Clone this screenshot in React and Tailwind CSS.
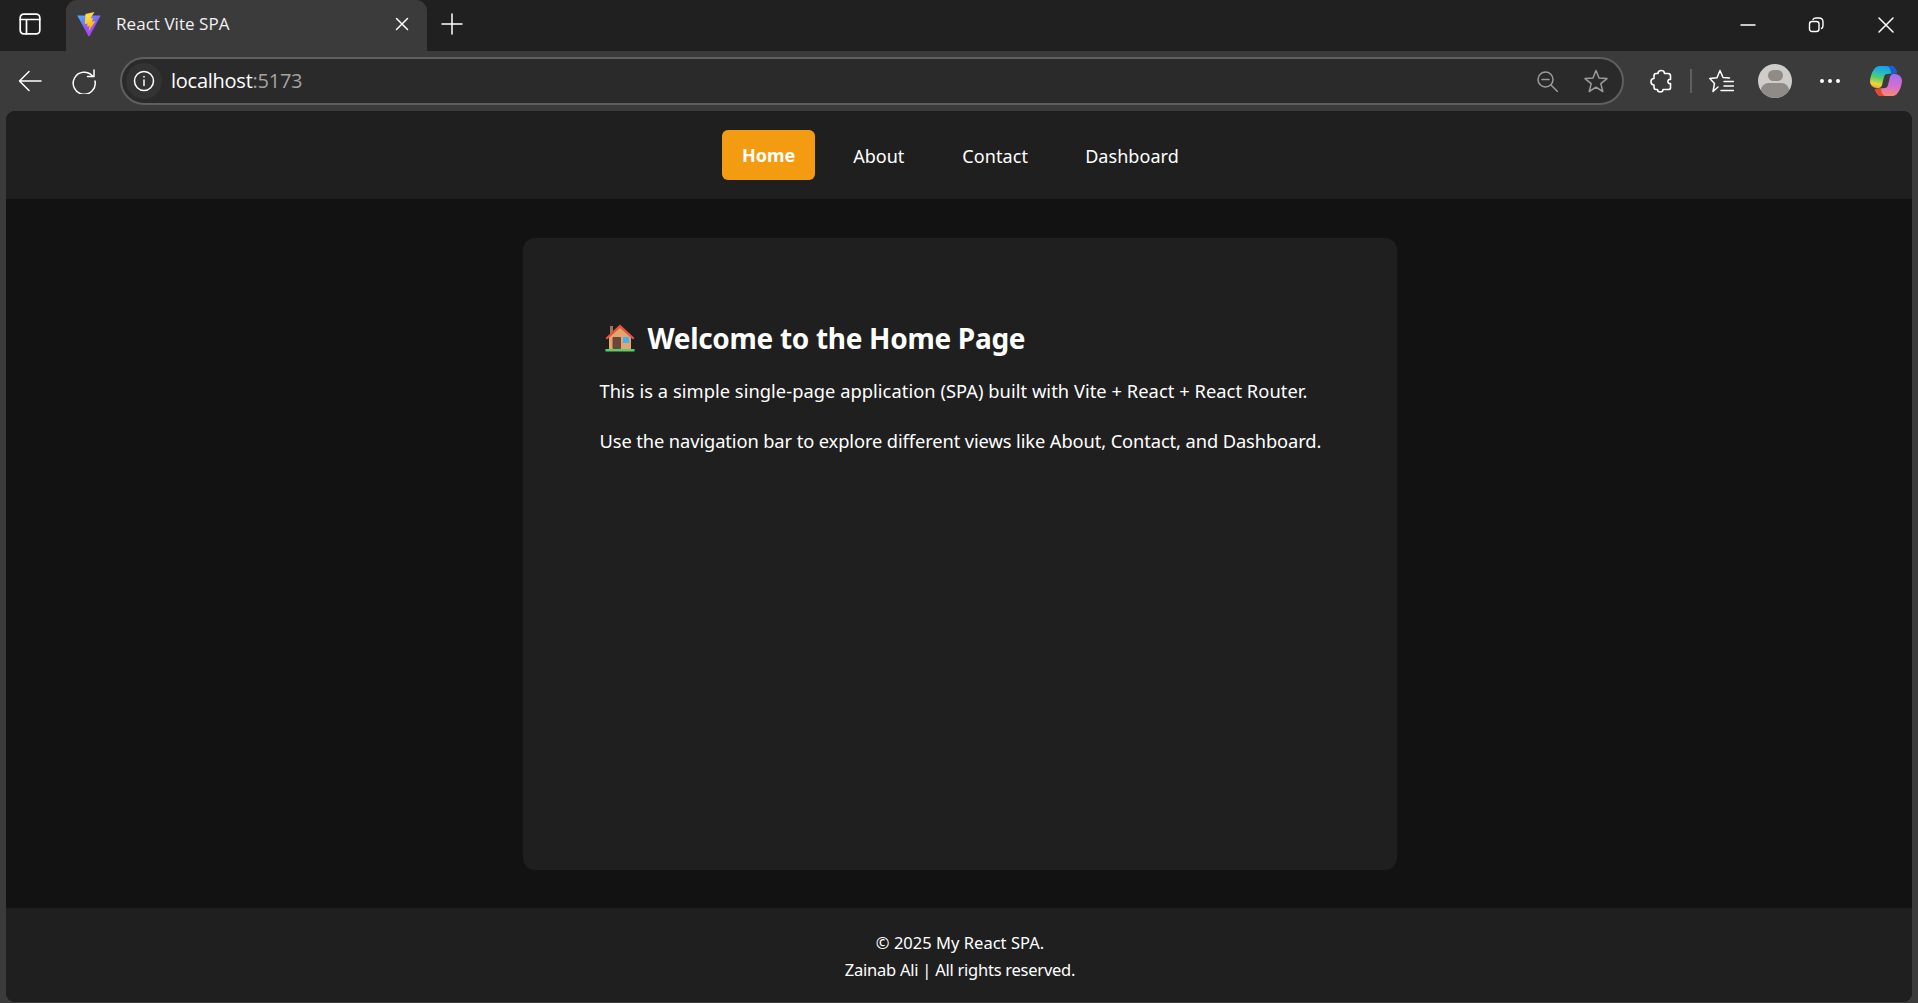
import React from "react";

function Vite() {
  return (
    <svg width="24" height="25" viewBox="0 0 24 25">
      <defs>
        <linearGradient id="v1" x1="0" y1="0" x2="0.7" y2="1">
          <stop offset="0" stopColor="#41b8ff" />
          <stop offset="0.55" stopColor="#8a5cfb" />
          <stop offset="1" stopColor="#bd34fe" />
        </linearGradient>
        <linearGradient id="v2" x1="0" y1="0" x2="0.4" y2="1">
          <stop offset="0" stopColor="#ffe45c" />
          <stop offset="0.5" stopColor="#ffd02e" />
          <stop offset="1" stopColor="#ffa800" />
        </linearGradient>
      </defs>
      <path d="M0.3 3.5 L23.7 3.5 L12.6 24 Q12 24.8 11.4 24 Z" fill="url(#v1)" />
      <path d="M17.5 0 L8.5 2 L7.8 12 L10.6 11.4 L10 14.5 L12.6 13.9 L11.5 19.5 L18.5 9 L15 9.7 L16 6 L13.4 6.5 Z" fill="url(#v2)" />
    </svg>
  );
}

function House() {
  return (
    <svg width="30" height="30" viewBox="0 0 30 30">
      <rect x="5" y="3" width="3" height="8" fill="#a1755a" />
      <path d="M4 13 L15 3 L26 13 V26 H4 Z" fill="#e2a671" />
      <path d="M0.5 15 L15 1.5 L29.5 15 L28 16.5 L15 5 L2 16.5 Z" fill="#e8533d" />
      <rect x="7.5" y="14" width="8.5" height="12" rx="1" fill="#6d4738" />
      <rect x="18" y="14" width="6" height="6" fill="#3fb4f4" />
      <rect x="0.5" y="26" width="29" height="2.5" fill="#5ccb6b" />
    </svg>
  );
}

function Copilot() {
  const blob = "M9 0 H21 C24 0 26 3 27 7 L17 8 C15.5 8 14.5 9 14 11 L12 19 C11.5 21.5 9.5 22 7 22 C3 22 0 19 0 15 C0.5 9 4 0 9 0 Z";
  return (
    <svg width="32" height="30" viewBox="0 0 32 30">
      <defs>
        <linearGradient id="c1" x1="0.55" y1="0" x2="0.3" y2="1">
          <stop offset="0" stopColor="#13a0f0" />
          <stop offset="0.3" stopColor="#25b8c8" />
          <stop offset="0.55" stopColor="#52cf6a" />
          <stop offset="0.85" stopColor="#e8d83a" />
          <stop offset="1" stopColor="#f3a82e" />
        </linearGradient>
        <linearGradient id="c2" x1="0.5" y1="1" x2="0.6" y2="0">
          <stop offset="0" stopColor="#a36cf0" />
          <stop offset="0.55" stopColor="#d86fd0" />
          <stop offset="1" stopColor="#f88a70" />
        </linearGradient>
      </defs>
      <path d={blob} fill="url(#c1)" />
      <path d={blob} fill="url(#c2)" transform="rotate(180 16 15)" />
      <path d="M17 0 H21 C24 0 26 3 27 7 L21 7.6 C21 4 19.5 1 17 0 Z" fill="#1a5ed6" />
      <path d="M15 30 H11 C8 30 6 27 5 23 L11 22.4 C11 26 12.5 29 15 30 Z" fill="#e8472f" />
    </svg>
  );
}

function Stroke({ w = 24, h = 24, c = "#fff", sw = 1.4, children }) {
  return (
    <svg width={w} height={h} viewBox={`0 0 ${w} ${h}`} fill="none" stroke={c} strokeWidth={sw} strokeLinecap="round" strokeLinejoin="round">
      {children}
    </svg>
  );
}

export default function App() {
  return (
    <div className="h-[1003px] w-[1918px] flex flex-col overflow-hidden bg-[#3b3b3b] text-white font-['Noto_Sans','Open_Sans',sans-serif]">
      {/* Tab strip */}
      <div className="h-[51px] shrink-0 bg-[#202020] flex items-stretch">
        <div className="w-[60px] mr-[6px] shrink-0 flex items-center justify-center pb-[3px]">
          <Stroke w={22} h={22} sw={1.7}>
            <rect x="1.2" y="1.2" width="19.6" height="19.6" rx="3.5" />
            <path d="M1.2 6.5 H20.8 M7.5 6.5 V20.8" />
          </Stroke>
        </div>
        <div className="w-[361px] shrink-0 bg-[#3b3b3b] rounded-t-[11px] flex items-center pl-[11px] pr-[18px] pb-[3px]">
          <Vite />
          <span className="ml-[15px] text-[17px] tracking-[0.05px] font-['Open_Sans',sans-serif] flex-1 text-[#f2f2f2]">React Vite SPA</span>
          <Stroke w={14} h={14} sw={1.5}>
            <path d="M1.5 1.5 L12.5 12.5 M12.5 1.5 L1.5 12.5" />
          </Stroke>
        </div>
        <div className="ml-[14px] flex items-center pb-[3px]">
          <Stroke w={22} h={22} sw={1.5}>
            <path d="M11 1 V21 M1 11 H21" />
          </Stroke>
        </div>
        <div className="flex-1" />
        <div className="flex items-center pb-[2px] pr-[24px]">
          <Stroke w={16} h={16} sw={1.4}>
            <path d="M1 8 H15" />
          </Stroke>
          <div className="ml-[52px]">
            <Stroke w={16} h={16} sw={1.4}>
              <rect x="1.5" y="4.5" width="9.5" height="10" rx="2.5" />
              <path d="M5 2.5 C5.5 1.5 6.5 1 8 1 H11 C13.5 1 15 2.5 15 5 V8.5 C15 10 14.5 11 13.5 11.5" />
            </Stroke>
          </div>
          <div className="ml-[54px]">
            <Stroke w={16} h={16} sw={1.5}>
              <path d="M1 1 L15 15 M15 1 L1 15" />
            </Stroke>
          </div>
        </div>
      </div>

      {/* Toolbar */}
      <div className="h-[60px] shrink-0 flex items-center">
        <div className="w-[60px] flex justify-center">
          <Stroke w={24} h={22} sw={1.5}>
            <path d="M23 11 H1.5 M11 1.5 L1.5 11 L11 20.5" />
          </Stroke>
        </div>
        <div className="w-[48px] flex justify-center">
          <Stroke w={26} h={26} sw={1.5}>
            <path d="M21.5 8 A11 11 0 1 0 24 13" />
            <path d="M23 2 V8.5 H16.5" />
          </Stroke>
        </div>
        <div className="ml-[12px] w-[1504px] h-[48px] rounded-full border-2 border-[#5f5f5f] bg-[#2a2a2a] flex items-center pl-[4px] pr-[14px]">
          <div className="w-[36px] h-[36px] rounded-full bg-[#333333] flex items-center justify-center">
            <Stroke w={22} h={22} sw={1.5}>
              <circle cx="11" cy="11" r="9.5" />
              <path d="M11 10 V15.5 M11 6.6 V7" />
            </Stroke>
          </div>
          <div className="ml-[9px] text-[20px] leading-none tracking-[-0.25px] font-['Open_Sans',sans-serif] flex-1">
            <span className="text-white">localhost</span>
            <span className="text-[#a3a3a3]">:5173</span>
          </div>
          <Stroke w={21} h={21} c="#9a9a9a" sw={1.5}>
            <circle cx="8.5" cy="8.5" r="7.5" />
            <path d="M5 8.5 H12 M14 14 L20.5 20.5" />
          </Stroke>
          <div className="w-[26px]" />
          <Stroke w={24} h={24} c="#9a9a9a" sw={1.5}>
            <path d="M12 1.5 L15 9 L23 9.6 L16.8 14.6 L18.8 22.5 L12 18.2 L5.2 22.5 L7.2 14.6 L1 9.6 L9 9 Z" />
          </Stroke>
        </div>
        <div className="ml-[26px] flex items-center">
          <Stroke w={22} h={24} sw={1.6}>
            <path d="M8 4.5 C8 0.5 14.5 0.5 14.5 4.5 H18 Q20.5 4.5 20.5 7 V10.5 C17 9.5 17 15.5 20.5 14.5 V19 Q20.5 20.5 18 20.5 H13 C13 23.8 7.5 23.8 7.5 20.5 H6 Q4 20.5 4 18 V16 C0 16 0 9.5 4 9.5 V7 Q4 4.5 6 4.5 Z" />
          </Stroke>
          <div className="ml-[18px] w-[2px] h-[24px] bg-[#5f5f5f]" />
          <div className="ml-[17px]">
            <Stroke w={25} h={24} sw={1.5}>
              <path d="M11 1.5 L14 8.5 L20.5 9 M9 18 L4 22.5 L5.5 14.5 L0.8 9.6 L8 8.8 L11 1.5" />
              <path d="M15 12.5 H24.5 M15 17 H24.5 M12 21.5 H24.5" />
            </Stroke>
          </div>
          <div className="ml-[24px] w-[34px] h-[34px] rounded-full bg-[#cfcdc9] overflow-hidden flex flex-col items-center">
            <div className="mt-[6px] w-[15px] h-[15px] rounded-full bg-[#8f8b87]" />
            <div className="mt-[2px] w-[28px] h-[20px] rounded-full bg-[#8f8b87]" />
          </div>
          <div className="ml-[28px] flex gap-[4px]">
            <div className="w-[4px] h-[4px] rounded-full bg-white" />
            <div className="w-[4px] h-[4px] rounded-full bg-white" />
            <div className="w-[4px] h-[4px] rounded-full bg-white" />
          </div>
          <div className="ml-[30px]">
            <Copilot />
          </div>
        </div>
      </div>

      {/* Page */}
      <div className="flex-1 min-h-0 mx-[6px] mb-[1px] bg-[#121212] rounded-[9px] overflow-hidden flex flex-col">
        <nav className="h-[88px] shrink-0 bg-[#1f1f1f] flex items-center justify-center pr-[17px] text-[18px]">
          <a className="h-[50px] w-[93px] mb-[1px] pt-[2px] flex items-center justify-center rounded-[6px] bg-[#f39c12] font-bold">Home</a>
          <a className="ml-[38px] pt-[3px]">About</a>
          <a className="ml-[58px] pt-[3px] tracking-[0.1px]">Contact</a>
          <a className="ml-[57px] pt-[3px] tracking-[0.05px]">Dashboard</a>
        </nav>
        <main className="flex-1 min-h-0 flex justify-center pt-[39px] pb-[38px] pl-[1px]">
          <section className="w-[874px] rounded-[12px] bg-[#1f1f1f] pt-[80px] pl-[77px]">
            <h1 className="flex items-center gap-[13px] h-[40px] ml-[5px] text-[28px] font-bold tracking-[-0.3px] leading-none">
              <House />
              <span>Welcome to the Home Page</span>
            </h1>
            <p className="mt-[20px] text-[18.3px] leading-[26px] tracking-[0.05px] whitespace-nowrap">This is a simple single-page application (SPA) built with Vite + React + React Router.</p>
            <p className="mt-[24px] text-[18.3px] leading-[26px] tracking-[-0.1px] whitespace-nowrap">Use the navigation bar to explore different views like About, Contact, and Dashboard.</p>
          </section>
        </main>
        <footer className="h-[94px] shrink-0 bg-[#1f1f1f] flex flex-col items-center pt-[21px] pl-[2px] text-[16.5px] leading-[27px]">
          <div className="tracking-[0.02px]">© 2025 My React SPA.</div>
          <div className="tracking-[-0.25px]">Zainab Ali | All rights reserved.</div>
        </footer>
      </div>
    </div>
  );
}
